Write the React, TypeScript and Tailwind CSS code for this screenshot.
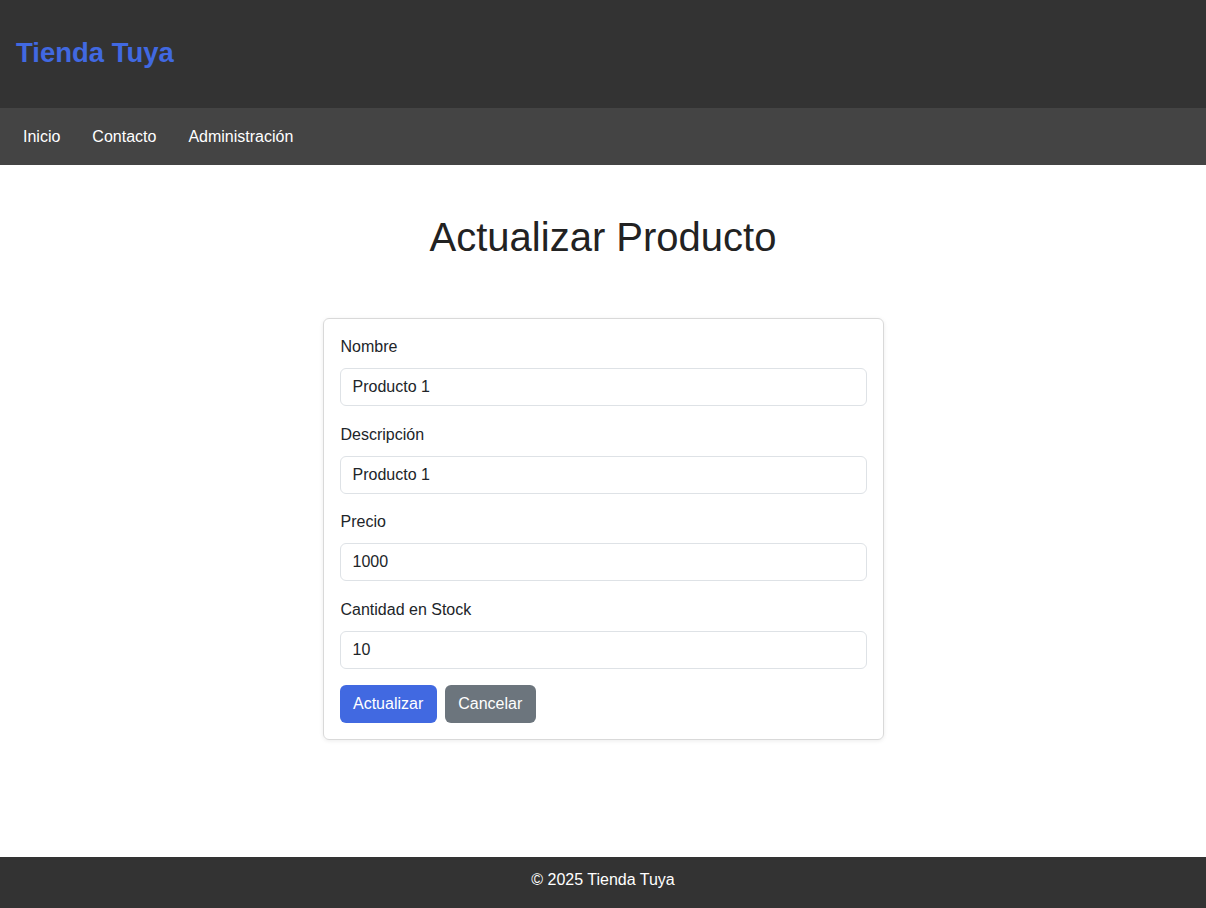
const campos = [
  { label: 'Nombre', value: 'Producto 1' },
  { label: 'Descripción', value: 'Producto 1' },
  { label: 'Precio', value: '1000' },
  { label: 'Cantidad en Stock', value: '10' },
];

export default function App() {
  return (
    <div className="min-h-screen flex flex-col bg-white text-[#212529] font-['Liberation_Sans',Arial,sans-serif]">
      {/* Header */}
      <header className="h-[108px] bg-[#333333] flex items-center px-4 pb-[2px]">
        <h1 className="text-[27.5px] font-bold text-[#4169e1]">Tienda Tuya</h1>
      </header>

      {/* Nav */}
      <nav className="h-[57px] bg-[#444444] flex items-center px-[7px]">
        {['Inicio', 'Contacto', 'Administración'].map((item) => (
          <a key={item} href="#" className="px-4 text-base text-white">
            {item}
          </a>
        ))}
      </nav>

      {/* Main */}
      <main className="flex-1 pt-12 px-4">
        <h2 className="text-[40px] leading-[48px] text-center text-[#222] mb-[57px]">Actualizar Producto</h2>

        <form className="w-[561px] mx-auto border border-[#d9d9d9] rounded-md shadow-[0_1px_4px_rgba(0,0,0,0.08)] p-4">
          {campos.map((c) => (
            <div key={c.label} className="mb-[16.5px]">
              <label className="block text-base leading-6 mb-[9px] pl-px">{c.label}</label>
              <input
                defaultValue={c.value}
                className="w-full h-[38px] px-3 text-base border border-[#dee2e6] rounded-md outline-none text-[#212529]"
              />
            </div>
          ))}
          <div className="flex gap-2">
            <button type="button" className="h-[38px] px-[13.5px] rounded-md bg-[#4169e1] text-white text-base">
              Actualizar
            </button>
            <button type="button" className="h-[38px] px-[13.5px] rounded-md bg-[#6c757d] text-white text-base">
              Cancelar
            </button>
          </div>
        </form>
      </main>

      {/* Footer */}
      <footer className="h-[51px] bg-[#333333] flex justify-center pt-[11px] text-white text-base leading-6">
        © 2025 Tienda Tuya
      </footer>
    </div>
  );
}
